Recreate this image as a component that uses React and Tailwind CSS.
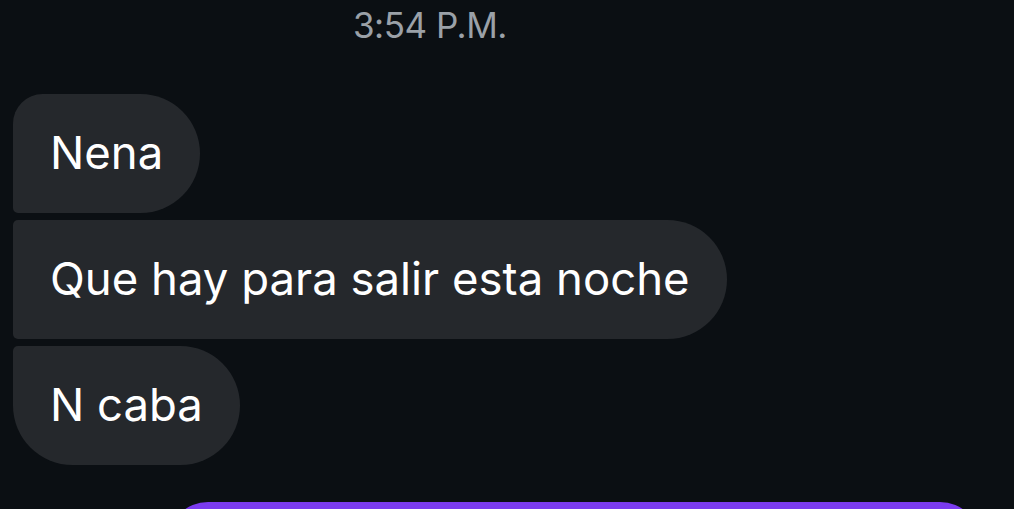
export default function App() {
  return (
    <div className="w-[1014px] h-[509px] overflow-hidden bg-[#0b0f13] flex flex-col" style={{ fontFamily: "Inter, 'Noto Sans', sans-serif" }}>
      <div className="h-[52px] pl-[353px] pt-[5px] text-[35px] leading-[40px] text-[#9ba1a8] tracking-[-0.5px]">3:54 P.M.</div>
      <div className="mt-[49px] pl-[13px] flex flex-col gap-[7px] items-start">
        <div className="h-[119px] flex items-center px-[37px] bg-[#25282c] text-white text-[45.5px] rounded-tl-[30px] rounded-bl-[5px] rounded-r-[60px]">Nena</div>
        <div className="h-[119px] flex items-center px-[37px] bg-[#25282c] text-white text-[45.5px] rounded-l-[5px] rounded-r-[60px]">Que hay para salir esta noche</div>
        <div className="h-[119px] flex items-center px-[37px] bg-[#25282c] text-white text-[45.5px] rounded-tl-[5px] rounded-bl-[60px] rounded-r-[60px]">N caba</div>
      </div>
      <div className="mt-[37px] ml-[168px] w-[812px] h-[60px] bg-[#7b3bf0] rounded-t-[40px] shrink-0"></div>
    </div>
  );
}
